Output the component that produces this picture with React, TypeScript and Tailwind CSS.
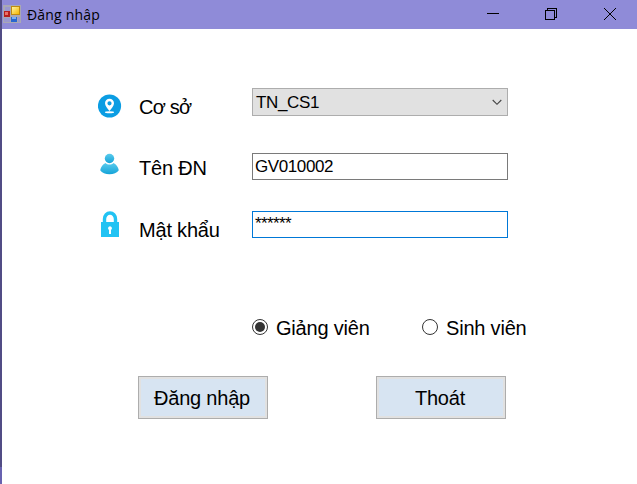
import type { ReactNode } from "react";

function AppIcon() {
  return (
    <svg width="18" height="18" viewBox="0 0 18 18" shapeRendering="crispEdges">
      <defs>
        <linearGradient id="gold" x1="0" y1="0" x2="1" y2="1">
          <stop offset="0" stopColor="#fff3a0" />
          <stop offset="1" stopColor="#f5b800" />
        </linearGradient>
      </defs>
      <rect width="18" height="18" fill="#a9a8b4" />
      <rect x="2" y="2" width="5" height="4" fill="#9a98cf" />
      <rect x="1" y="13" width="6" height="4" fill="#9a98cf" />
      <rect x="15" y="12" width="2" height="5" fill="#9a98cf" />
      <rect x="8" y="1" width="9" height="9" fill="#c08a10" />
      <rect x="9" y="2" width="7" height="7" fill="url(#gold)" />
      <rect x="1" y="6" width="6" height="6" fill="#b51d1d" />
      <rect x="2" y="7" width="3" height="3" fill="#ea7068" />
      <rect x="8" y="12" width="6" height="5" fill="#2866cf" />
      <rect x="9" y="12" width="4" height="2" fill="#78b0f5" />
    </svg>
  );
}

function PinIcon() {
  return (
    <svg width="24" height="24" viewBox="0 0 24 24">
      <circle cx="11.5" cy="12" r="11.6" fill="#0b9de3" />
      <path
        fillRule="evenodd"
        fill="#fff"
        d="M11.500 4.700a4.500 4.500 0 0 0-4.500 4.500c0 2.800 2.700 5.300 4.500 7.700 1.800-2.400 4.500-4.900 4.500-7.700a4.500 4.500 0 0 0-4.500-4.500Zm0 2.500a2.100 2.100 0 1 1 0 4.200 2.100 2.100 0 0 1 0-4.200Z"
      />
      <ellipse cx="11.500" cy="18.300" rx="4.600" ry="1" fill="#fff" />
    </svg>
  );
}

function UserIcon() {
  return (
    <svg width="20" height="22" viewBox="0 0 20 22">
      <defs>
        <linearGradient id="person" x1="0" y1="0" x2="0" y2="1">
          <stop offset="0" stopColor="#5acbed" />
          <stop offset="1" stopColor="#14a3d8" />
        </linearGradient>
      </defs>
      <circle cx="9.500" cy="5.500" r="4.700" fill="url(#person)" />
      <path
        fill="url(#person)"
        d="M5.500 10c2.200 2 5.800 2 8 0 2.900 1.200 4.700 4.300 5.300 7.200C17 19.800 13.500 21.200 9.500 21.200S2 19.800.200 17.200C.800 14.300 2.600 11.200 5.500 10Z"
      />
    </svg>
  );
}

function LockIcon() {
  return (
    <svg width="18" height="27" viewBox="0 0 18 27">
      <path d="M3.500 13V8a5.500 6 0 0 1 11 0v5" fill="none" stroke="#22c3f3" strokeWidth="3.400" />
      <rect y="11" width="18" height="15" fill="#22c3f3" />
      <path d="M9 15.200a2 2 0 0 0-1 3.700V23h2v-4.100a2 2 0 0 0-1-3.700Z" fill="#fff" />
    </svg>
  );
}

function Row({ icon, label, labelClass, className, children }: {
  icon: ReactNode;
  label: string;
  labelClass: string;
  className: string;
  children: ReactNode;
}) {
  return (
    <div className={`flex h-[30px] items-start ${className}`}>
      <div className="flex w-6 shrink-0 justify-center">{icon}</div>
      <label className={`ml-[17px] w-[113px] shrink-0 whitespace-nowrap text-[20px] leading-6 ${labelClass}`}>
        {label}
      </label>
      {children}
    </div>
  );
}

function Radio({ label, checked }: { label: string; checked?: boolean }) {
  return (
    <div className="flex h-6 items-start gap-2 whitespace-nowrap text-[20px] leading-6 tracking-[-0.2px]" role="radio" aria-checked={!!checked}>
      <svg className="mt-1" width="16" height="16" viewBox="0 0 16 16">
        <circle cx="8" cy="8" r="7.500" fill="#fff" stroke="#333" />
        {checked && <circle cx="8" cy="8" r="5" fill="#333" />}
      </svg>
      <span className="mt-px">{label}</span>
    </div>
  );
}

function Button({ children }: { children: string }) {
  return (
    <button className="h-[43px] w-[130px] border border-[#adadad] bg-[#d7e4f2] p-0 pr-[2px] text-[20px] leading-6 tracking-[-0.2px] shadow-[inset_0_0_0_2px_#e1e1e1]">
      {children}
    </button>
  );
}

export default function App() {
  return (
    <div className="flex h-[484px] w-[637px] overflow-hidden bg-white text-black [font-family:'Liberation_Sans',Arial,sans-serif]">
      <div className="flex w-0.5 shrink-0 flex-col">
        <div className="h-[467px] bg-[#514c85]" />
        <div className="flex-1 bg-[#6862b0]" />
      </div>
      <main className="flex-1">
        <header className="flex h-[29px] items-center bg-[#8f8bd8]">
          <div className="ml-px pb-px"><AppIcon /></div>
          <span className="ml-1.5 text-[14px] leading-5 tracking-[0.2px] [font-family:'Open_Sans','Noto_Sans',sans-serif]">Đăng nhập</span>
          <svg className="mb-px ml-auto mr-5" width="132" height="14" viewBox="0 0 132 14" fill="none" stroke="#000">
            <path d="M2 6.500h12M60.500 3.500h9v9h-9zM62.500 3.500v-2h9v9h-2" shapeRendering="crispEdges" />
            <path d="m119 1 12 12m0-12-12 12" />
          </svg>
        </header>
        <section className="pl-[96px] pt-[59px]">
          <Row icon={<div className="mt-[6px]"><PinIcon /></div>} label="Cơ sở" labelClass="mt-[7px] tracking-[-0.8px]" className="">
            <div className="flex h-[28px] w-[256px] items-center justify-between border border-[#adadad] bg-[#e1e1e1] pl-[3px] pr-[5px] text-[17px] tracking-[-0.35px]">
              <span className="pt-[2px]">TN_CS1</span>
              <svg width="10" height="7" viewBox="0 0 10 7" fill="none" stroke="#444" strokeWidth="1.100">
                <path d="m.700 1 4.300 4.300L9.300 1" />
              </svg>
            </div>
          </Row>
          <Row icon={<UserIcon />} label="Tên ĐN" labelClass="mt-[3px] tracking-[-0.2px]" className="mt-[35px]">
            <div className="h-[27px] w-[256px] border border-[#7a7a7a] pl-[2px] pt-[3px] text-[17px] leading-5 tracking-[-0.4px]">GV010002</div>
          </Row>
          <Row icon={<LockIcon />} label="Mật khẩu" labelClass="mt-[7px] tracking-[-0.2px]" className="mt-[28px]">
            <div className="h-[27px] w-[256px] border border-[#0078d7] pl-[2px] pt-[2px] text-[17px] leading-5 tracking-[-0.6px]">******</div>
          </Row>
          <div className="ml-[154px] mt-[74px] flex" role="radiogroup">
            <div className="w-[170px]"><Radio label="Giảng viên" checked /></div>
            <Radio label="Sinh viên" />
          </div>
          <div className="ml-[40px] mt-[37px] flex gap-[108px]">
            <Button>Đăng nhập</Button>
            <Button>Thoát</Button>
          </div>
        </section>
      </main>
    </div>
  );
}
